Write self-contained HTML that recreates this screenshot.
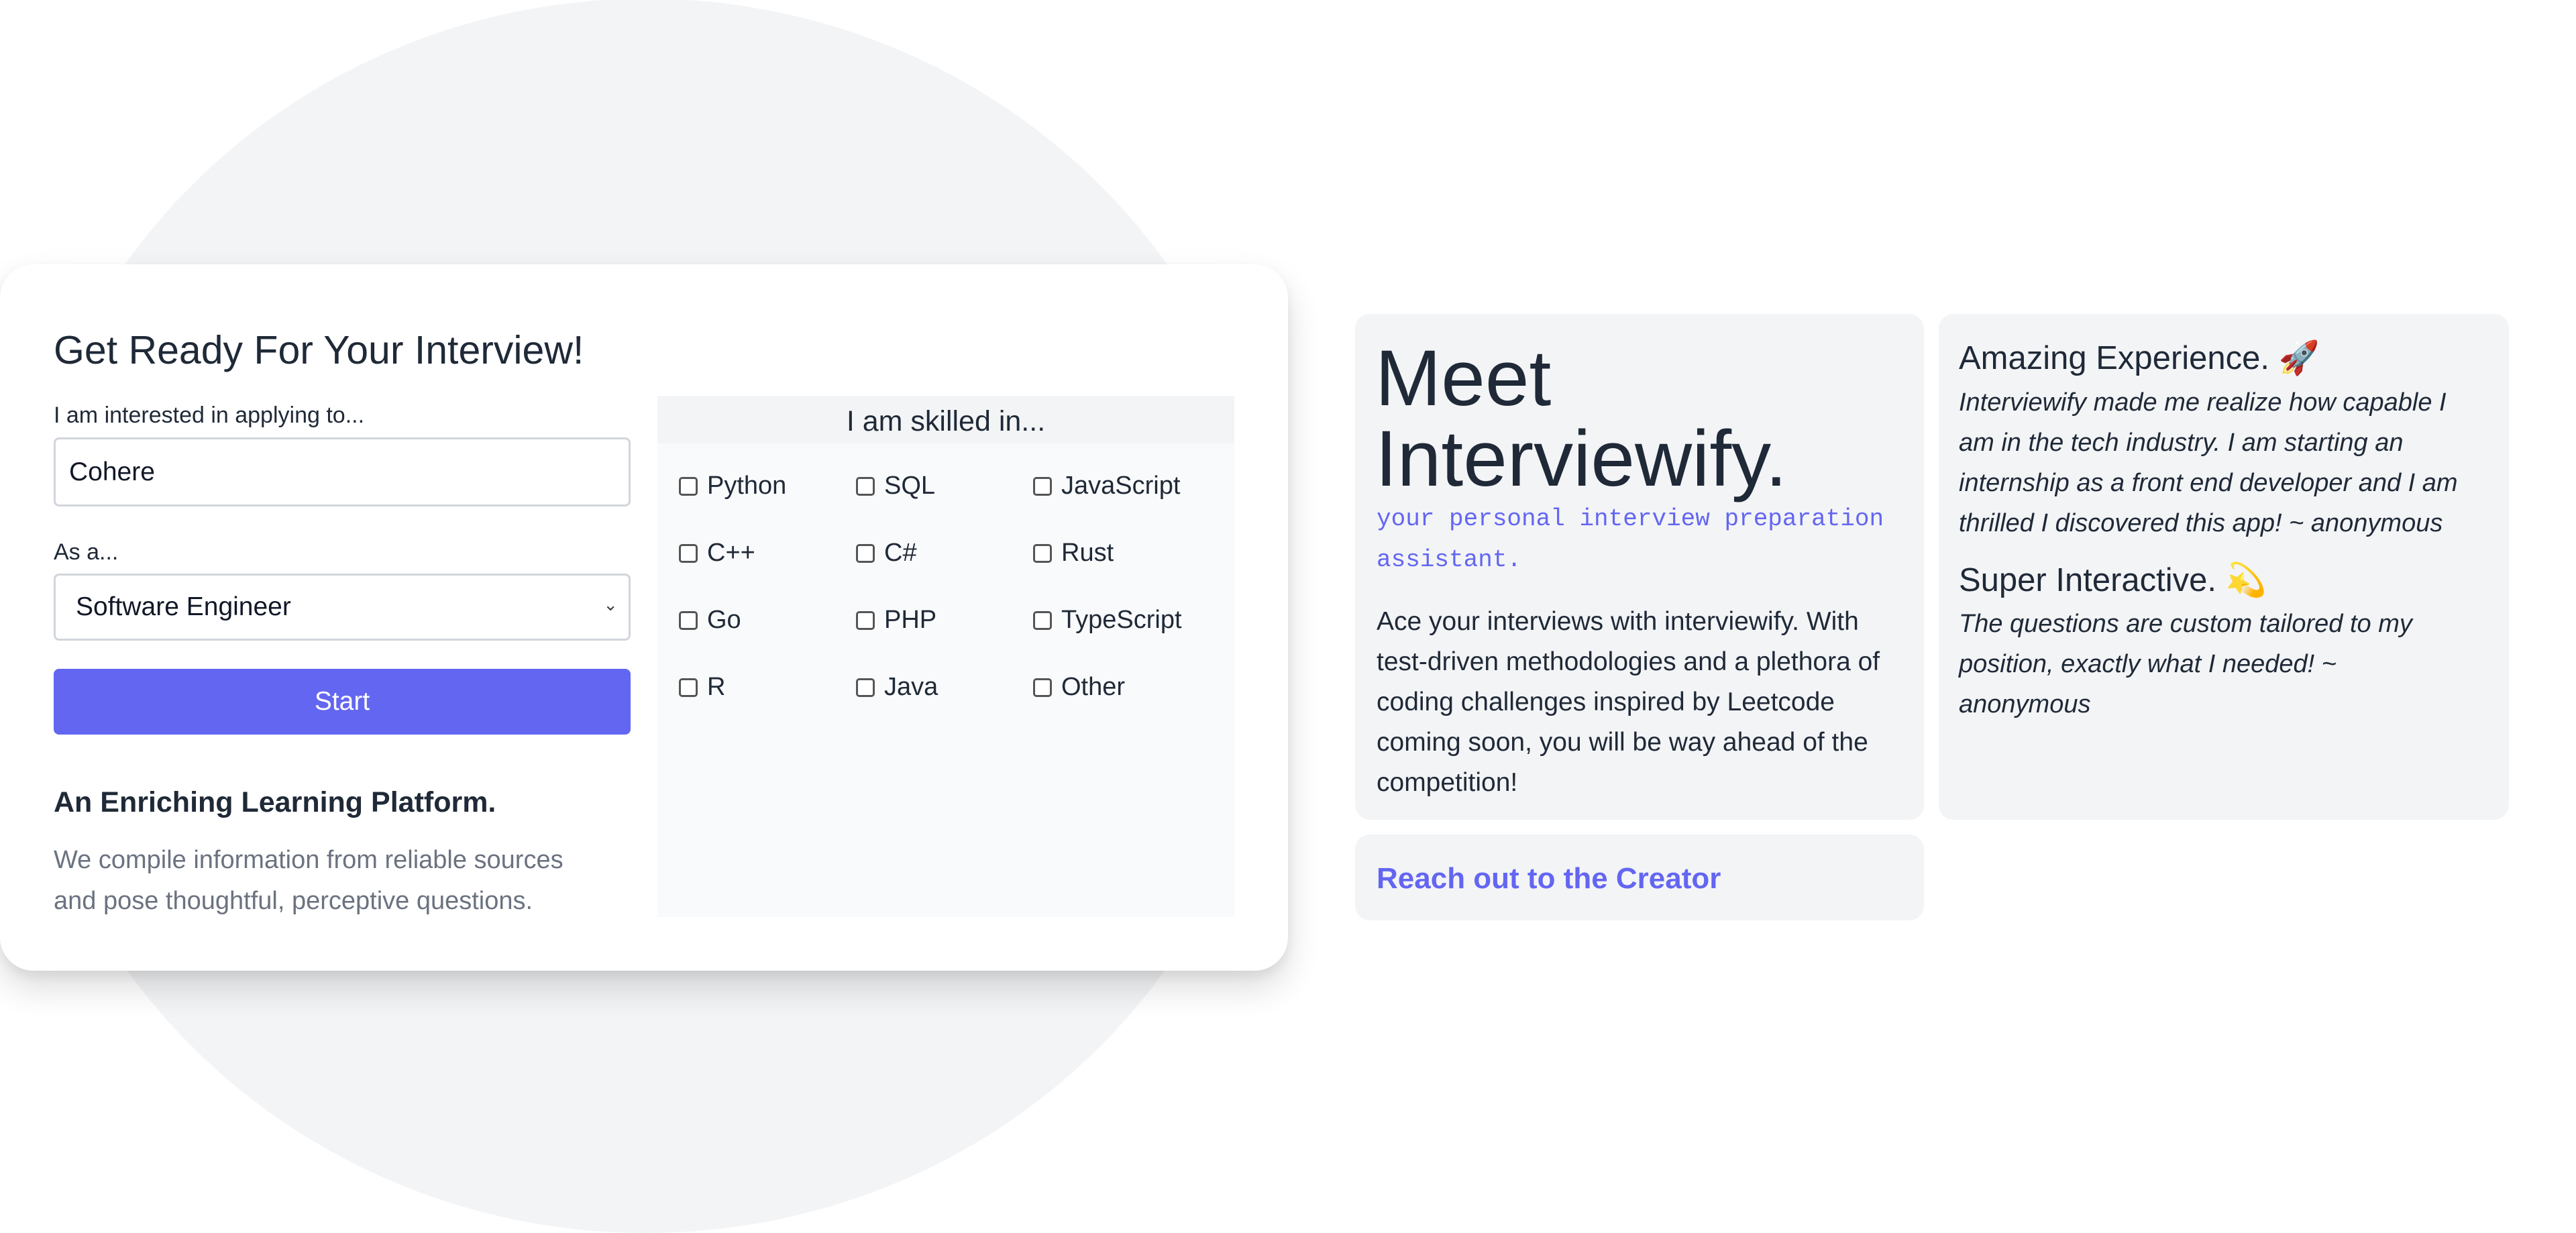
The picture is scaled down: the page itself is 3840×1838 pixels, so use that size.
<!DOCTYPE html>
<html><head><meta charset="utf-8"><style>
*{box-sizing:border-box;margin:0;padding:0}
body{width:3840px;height:1837px;overflow:hidden;background:#fff;font-family:"Liberation Sans",sans-serif;color:#1f2937;position:relative}
.a{position:absolute;white-space:nowrap}
.circle{position:absolute;left:18px;top:-2px;width:1890px;height:1840px;border-radius:50%;background:#f3f4f6}
.card{position:absolute;left:0;top:394px;width:1920px;height:1053px;background:#fff;border-radius:50px;box-shadow:0 25px 50px rgba(0,0,0,.14),0 8px 16px rgba(0,0,0,.06)}
.input{position:absolute;left:80px;width:860px;border:3px solid #d1d5db;border-radius:8px;background:#fff;font-size:39px;color:#111827;padding-left:20px;display:flex;align-items:center}
.cb{position:absolute;font-size:38px;color:#1f2937;display:flex;align-items:center}
.cb i{display:inline-block;width:28px;height:28px;border:3px solid #555;border-radius:5px;margin-right:14px;background:#fff}
.box{position:absolute;background:#f3f4f6;border-radius:22px}
</style></head><body>
<div class="circle"></div>
<div class="card"></div>
<div class="a" style="left:80px;top:488px;font-size:59px;font-weight:500;color:#1f2937">Get Ready For Your Interview!</div>
<div class="a" style="left:80px;top:600px;font-size:34px;color:#1f2937">I am interested in applying to...</div>
<div class="input" style="top:652px;height:103px">Cohere</div>
<div class="a" style="left:80px;top:804px;font-size:34px;color:#1f2937">As a...</div>
<div class="input" style="top:855px;height:100px;padding-left:30px">Software Engineer<span style="position:absolute;right:16px;top:28px;font-size:26px;color:#444">&#8964;</span></div>
<div class="a" style="left:80px;top:997px;width:860px;height:98px;background:#6366f1;border-radius:8px;color:#fff;font-size:39px;display:flex;align-items:center;justify-content:center">Start</div>
<div class="a" style="left:80px;top:1172px;font-size:43px;font-weight:bold;color:#1f2937">An Enriching Learning Platform.</div>
<div class="a" style="left:80px;top:1252px;font-size:38px;line-height:61px;color:#6b7280">We compile information from reliable sources<br>and pose thoughtful, perceptive questions.</div>
<div class="a" style="left:980px;top:590px;width:860px;height:777px;background:#f9fafb"></div>
<div class="a" style="left:980px;top:590px;width:860px;height:71px;background:#f3f4f6;font-size:43px;font-weight:500;display:flex;align-items:center;justify-content:center;padding-top:6px">I am skilled in...</div>
<div class="cb" style="left:1012px;top:703px"><i></i>Python</div>
<div class="cb" style="left:1276px;top:703px"><i></i>SQL</div>
<div class="cb" style="left:1540px;top:703px"><i></i>JavaScript</div>
<div class="cb" style="left:1012px;top:803px"><i></i>C++</div>
<div class="cb" style="left:1276px;top:803px"><i></i>C#</div>
<div class="cb" style="left:1540px;top:803px"><i></i>Rust</div>
<div class="cb" style="left:1012px;top:903px"><i></i>Go</div>
<div class="cb" style="left:1276px;top:903px"><i></i>PHP</div>
<div class="cb" style="left:1540px;top:903px"><i></i>TypeScript</div>
<div class="cb" style="left:1012px;top:1003px"><i></i>R</div>
<div class="cb" style="left:1276px;top:1003px"><i></i>Java</div>
<div class="cb" style="left:1540px;top:1003px"><i></i>Other</div>

<div class="box" style="left:2020px;top:468px;width:848px;height:754px"></div>
<div class="box" style="left:2890px;top:468px;width:850px;height:754px"></div>
<div class="box" style="left:2020px;top:1244px;width:848px;height:128px"></div>
<div class="a" style="left:2050px;top:504px;font-size:118px;line-height:120px;color:#1f2937">Meet<br>Interviewify.</div>
<div class="a" style="left:2052px;top:743px;font-size:36px;line-height:61px;color:#6366f1;font-family:'Liberation Mono',monospace">your personal interview preparation<br>assistant.</div>
<div class="a" style="left:2052px;top:897px;font-size:39px;line-height:60px;color:#1f2937">Ace your interviews with interviewify. With<br>test-driven methodologies and a plethora of<br>coding challenges inspired by Leetcode<br>coming soon, you will be way ahead of the<br>competition!</div>
<div class="a" style="left:2920px;top:505px;font-size:49px;color:#1f2937">Amazing Experience. 🚀</div>
<div class="a" style="left:2920px;top:570px;font-size:38px;line-height:60px;font-style:italic;color:#1f2937">Interviewify made me realize how capable I<br>am in the tech industry. I am starting an<br>internship as a front end developer and I am<br>thrilled I discovered this app! ~ anonymous</div>
<div class="a" style="left:2920px;top:836px;font-size:49px;color:#1f2937">Super Interactive. 💫</div>
<div class="a" style="left:2920px;top:900px;font-size:38px;line-height:60px;font-style:italic;color:#1f2937">The questions are custom tailored to my<br>position, exactly what I needed! ~<br>anonymous</div>
<div class="a" style="left:2052px;top:1285px;font-size:44px;font-weight:bold;color:#6366f1">Reach out to the Creator</div>
</body></html>
